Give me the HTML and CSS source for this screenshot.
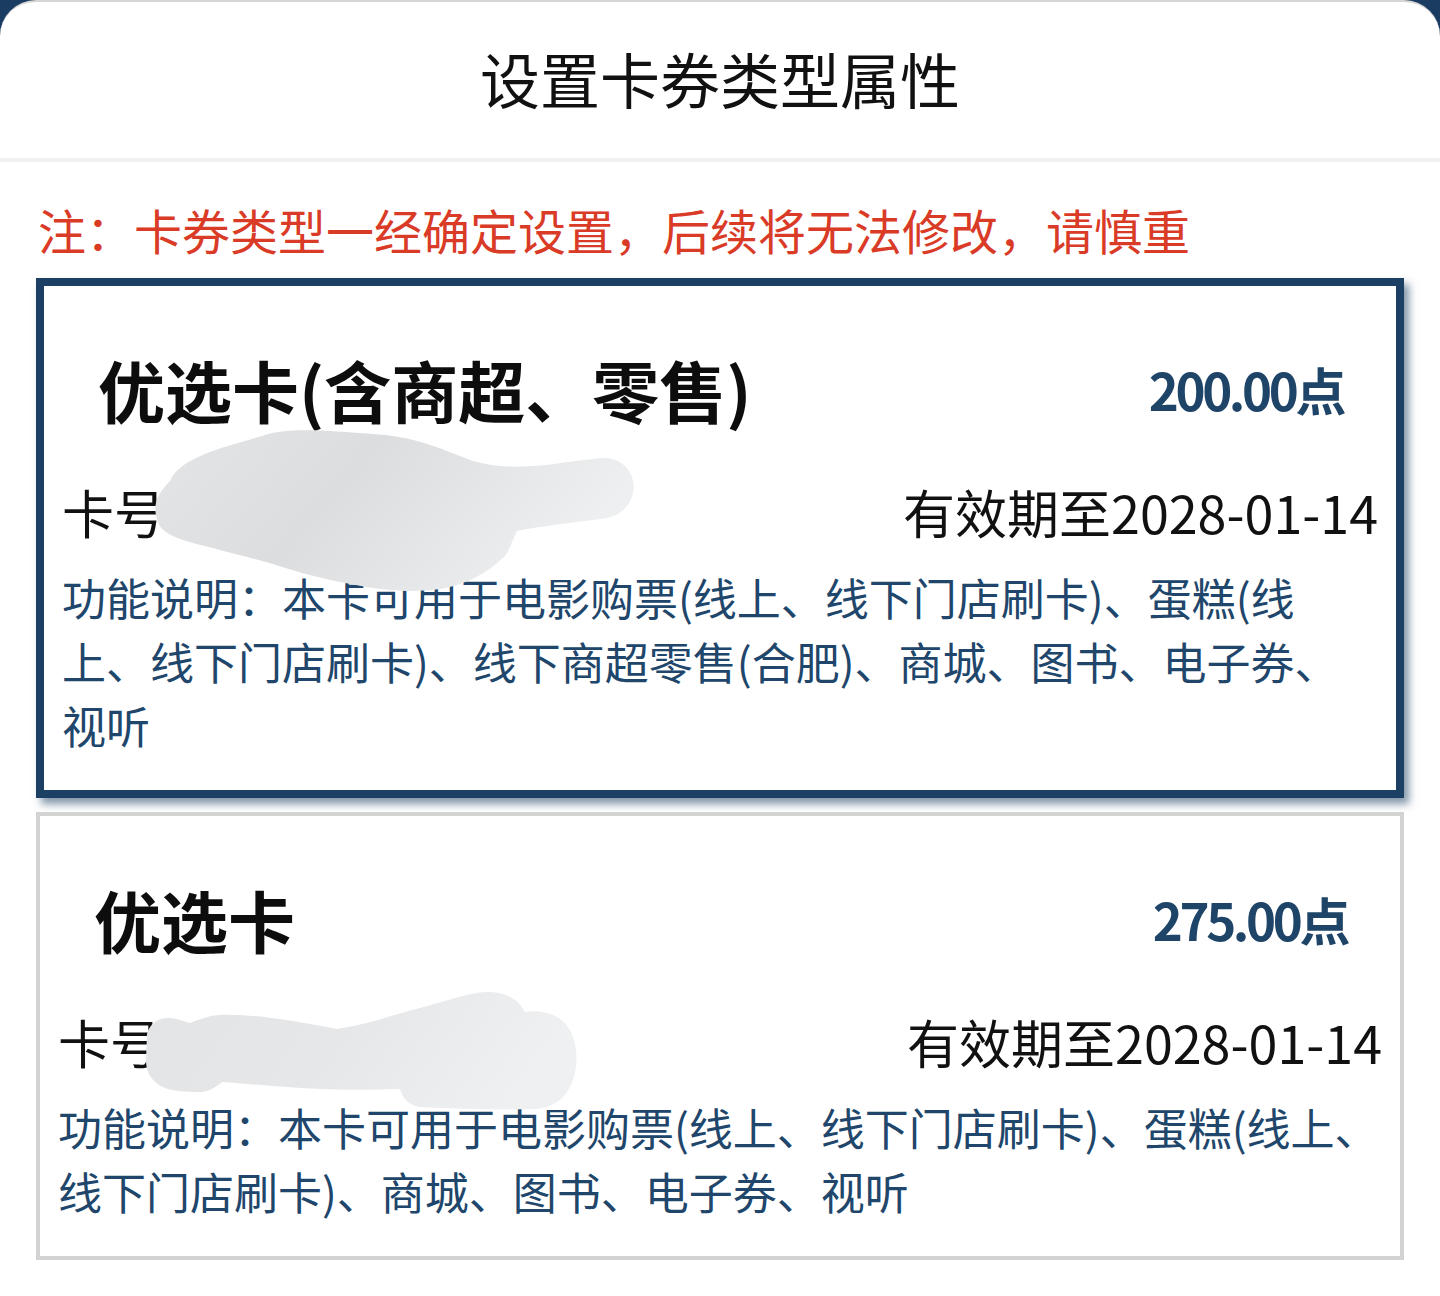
FILE: index.html
```html
<!DOCTYPE html>
<html lang="zh-CN">
<head>
<meta charset="utf-8">
<title>设置卡券类型属性</title>
<link rel="stylesheet" href="styles.css">
</head>
<body>
<div class="sheet">
  <header class="header">
    <h1 class="title">设置卡券类型属性</h1>
  </header>
  <main class="content">
    <p class="note">注：卡券类型一经确定设置，后续将无法修改，请慎重</p>

    <section class="card card-selected">
      <div class="card-head">
        <span class="card-name">优选卡(含商超、零售)</span>
        <span class="card-price">200.00点</span>
      </div>
      <div class="card-row">
        <span class="card-no">卡号</span>
        <span class="card-date">有效期至2028-01-14</span>
      </div>
      <p class="card-desc">功能说明：本卡可用于电影购票(线上、线下门店刷卡)、蛋糕(线上、线下门店刷卡)、线下商超零售(合肥)、商城、图书、电子券、视听</p>
      <svg class="smear smear-1" width="490" height="170" viewBox="150 425 490 170" aria-hidden="true">
        <defs>
          <linearGradient id="g1" x1="0" y1="0" x2="1" y2="0.3">
            <stop offset="0" stop-color="#e4e5e7"/>
            <stop offset="0.45" stop-color="#dcdddf"/>
            <stop offset="1" stop-color="#eeeff0"/>
          </linearGradient>
        </defs>
        <path fill="url(#g1)" d="M170 480 C180 455 230 445 265 434 C290 426 330 430 373 433 C420 436 445 450 473 460 C520 474 570 458 607 457 C630 460 636 480 633 492 C628 512 612 517 600 518 C570 522 535 526 517 530 C512 540 510 548 505 555 C485 575 460 585 440 588 C410 592 390 589 373 587 C330 580 300 572 273 563 C250 556 230 552 213 547 C185 540 160 535 157 518 C153 505 156 494 170 480 Z"/>
      </svg>
    </section>

    <section class="card card-plain">
      <div class="card-head">
        <span class="card-name">优选卡</span>
        <span class="card-price">275.00点</span>
      </div>
      <div class="card-row">
        <span class="card-no">卡号</span>
        <span class="card-date">有效期至2028-01-14</span>
      </div>
      <p class="card-desc">功能说明：本卡可用于电影购票(线上、线下门店刷卡)、蛋糕(线上、线下门店刷卡)、商城、图书、电子券、视听</p>
      <svg class="smear smear-2" width="445" height="125" viewBox="140 985 445 125" aria-hidden="true">
        <defs>
          <linearGradient id="g2" x1="0" y1="0" x2="1" y2="0.2">
            <stop offset="0" stop-color="#e3e4e6"/>
            <stop offset="0.5" stop-color="#e6e7e9"/>
            <stop offset="1" stop-color="#eff0f1"/>
          </linearGradient>
        </defs>
        <path fill="url(#g2)" d="M147 1032 C150 1020 160 1015 170 1016 C180 1017 185 1020 190 1021 C205 1015 215 1012 230 1013 C260 1013 290 1018 337 1027 C370 1022 395 1012 420 1006 C450 998 470 990 490 990 C510 991 520 1000 525 1010 C540 1007 560 1012 568 1025 C578 1040 578 1060 574 1075 C568 1095 555 1105 537 1107 C500 1108 460 1107 420 1105 C410 1104 402 1096 400 1087 C370 1088 345 1088 320 1087 C280 1085 250 1082 222 1080 C215 1086 208 1090 200 1090 C185 1090 175 1089 168 1087 C152 1082 146 1070 146 1058 Z"/>
      </svg>
    </section>
  </main>
</div>
</body>
</html>
```

FILE: styles.css
```css
html, body {
  margin: 0;
  padding: 0;
}

body {
  background: #1b3c62;
  font-family: "Noto Sans CJK SC", "Noto Sans", sans-serif;
  color: #111111;
}

.sheet {
  background: #ffffff;
  border-radius: 36px 36px 0 0;
  min-height: 1296px;
  box-sizing: border-box;
  border-top: 2px solid #d6d6d6;
}

.header {
  height: 160px;
  padding-top: 36px;
  box-sizing: border-box;
  border-bottom: 4px solid #f1f1f1;
}

.title {
  margin: 0;
  text-align: center;
  font-size: 60px;
  line-height: 80px;
  font-weight: 400;
  color: #111111;
}

.content {
  padding: 0 36px;
}

.note {
  margin: 35px 0 17px 2px;
  font-size: 48px;
  line-height: 64px;
  color: #d93b27;
}

.card {
  position: relative;
  background: #ffffff;
  padding: 63px 18px 33px 18px;
}

.card-selected {
  border: 8px solid #1c4063;
  box-shadow: 5px 6px 8px rgba(28, 64, 99, 0.55);
}

.card-plain {
  margin-top: 14px;
  border: 4px solid #d3d3d3;
}

.card-head {
  display: flex;
  justify-content: space-between;
  align-items: center;
  height: 80px;
  padding: 0 35px 0 36px;
}

.card-name {
  font-size: 67px;
  line-height: 80px;
  font-weight: 700;
  color: #0d0d0d;
}

.card-price {
  font-size: 51px;
  line-height: 80px;
  font-weight: 700;
  color: #1e4468;
  letter-spacing: -3.4px;
}

.card-row {
  display: flex;
  justify-content: space-between;
  align-items: center;
  margin-top: 51px;
  font-size: 52px;
  line-height: 64px;
  color: #111111;
}

.card-desc {
  margin: 21px 0 0 0;
  font-size: 44px;
  line-height: 64px;
  color: #21466b;
}

.smear {
  position: absolute;
  display: block;
}

.smear-1 {
  left: 106px;
  top: 140px;
}

.smear-2 {
  left: 100px;
  top: 171px;
}
```
